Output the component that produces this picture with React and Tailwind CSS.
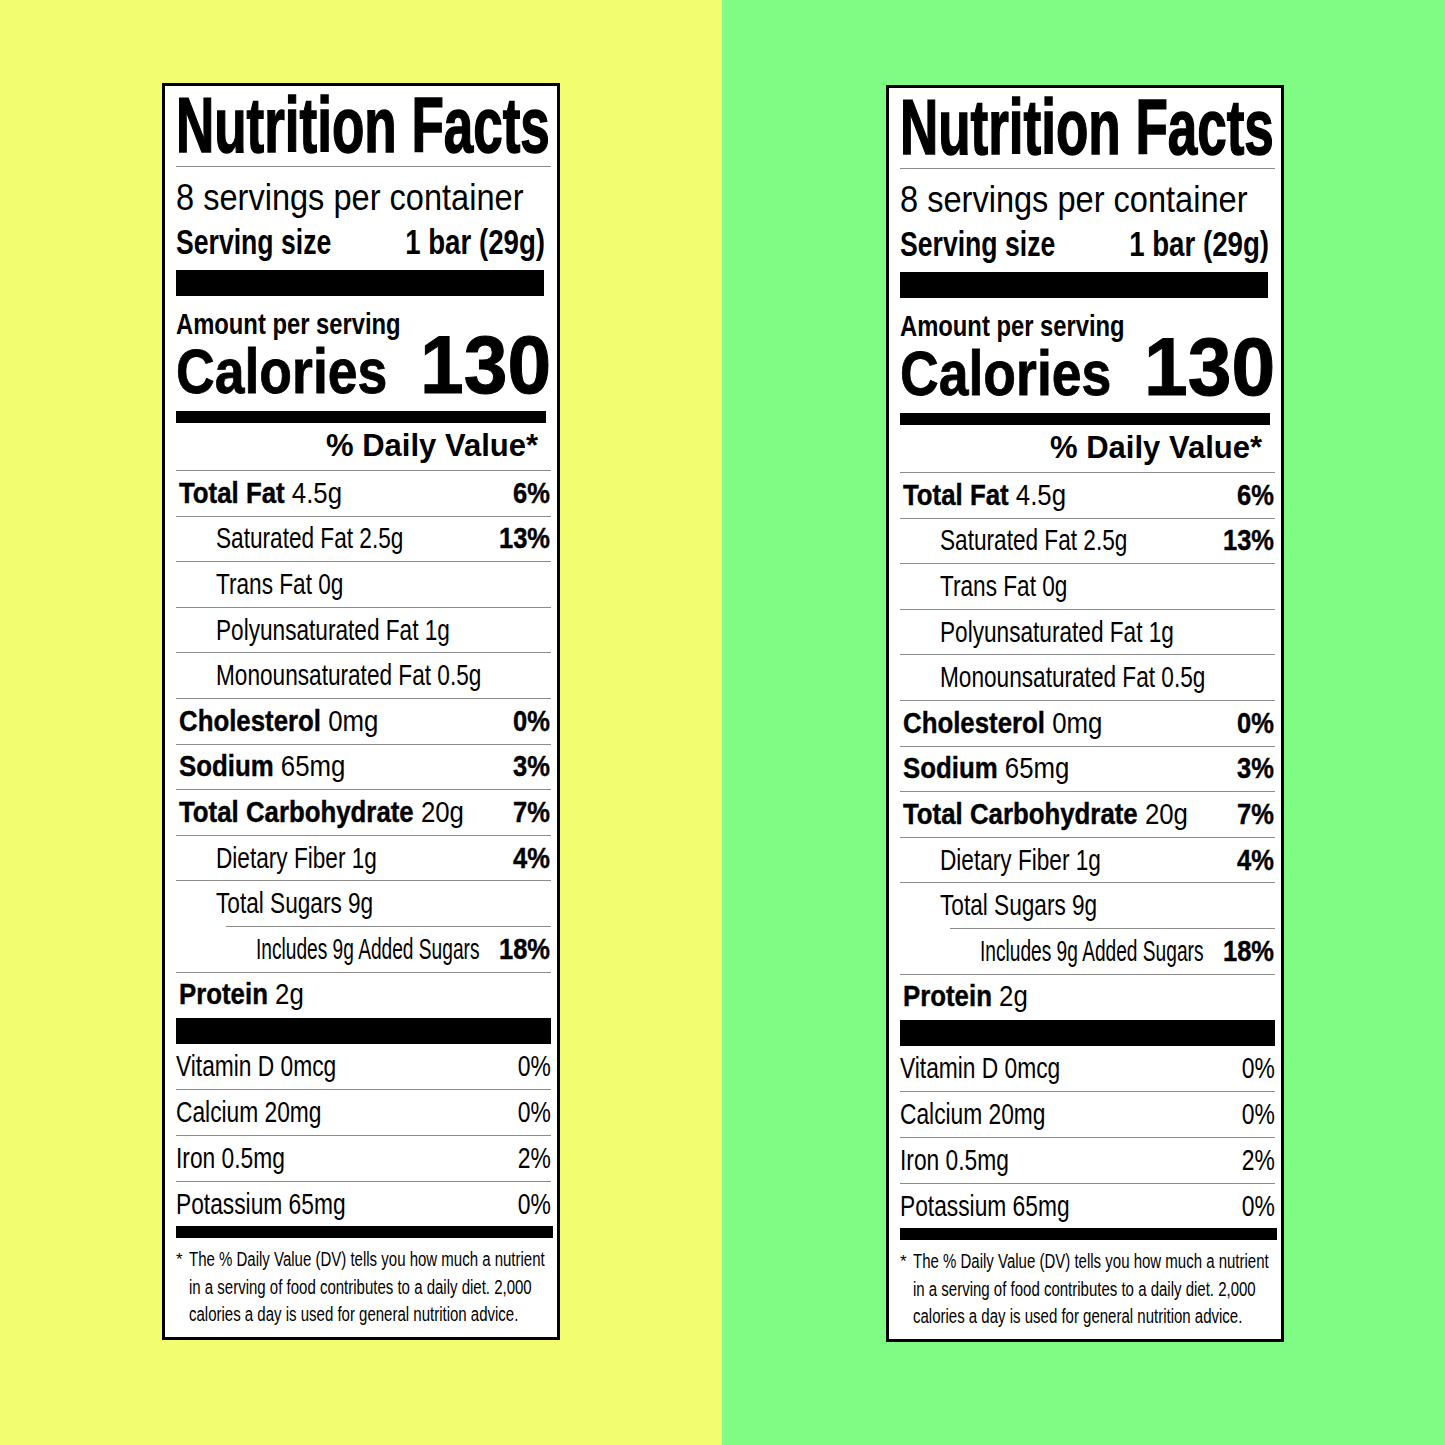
const rows = [
  { bold: 'Total Fat', rest: '4.5g', pct: '6%', level: 0 },
  { rest: 'Saturated Fat 2.5g', pct: '13%', level: 1 },
  { rest: 'Trans Fat 0g', level: 1 },
  { rest: 'Polyunsaturated Fat 1g', level: 1 },
  { rest: 'Monounsaturated Fat 0.5g', level: 1 },
  { bold: 'Cholesterol', rest: '0mg', pct: '0%', level: 0 },
  { bold: 'Sodium', rest: '65mg', pct: '3%', level: 0 },
  { bold: 'Total Carbohydrate', rest: '20g', pct: '7%', level: 0 },
  { rest: 'Dietary Fiber 1g', pct: '4%', level: 1 },
  { rest: 'Total Sugars 9g', level: 1 },
  { rest: 'Includes 9g Added Sugars', pct: '18%', level: 2 },
  { bold: 'Protein', rest: '2g', level: 0 },
]

const vitamins = [
  { name: 'Vitamin D 0mcg', pct: '0%' },
  { name: 'Calcium 20mg', pct: '0%' },
  { name: 'Iron 0.5mg', pct: '2%' },
  { name: 'Potassium 65mg', pct: '0%' },
]

function NutrientRow({ row }) {
  const pad = row.level === 0 ? 'pl-[3px]' : row.level === 1 ? 'pl-[40px]' : 'pl-[80px]'
  const squeeze = row.level === 0 ? 'scale-x-[0.89]' : row.level === 1 ? 'scale-x-[0.78]' : 'scale-x-[0.66]'
  return (
    <>
      <div className={`h-px bg-[#8c8c8c] ${row.level === 2 ? 'ml-[50px]' : ''}`} />
      <div className={`flex h-[44.6px] items-center pr-px text-[29px] leading-none ${pad}`}>
        <div className="min-w-0 flex-1 whitespace-nowrap">
          <span className={`inline-block origin-left ${squeeze}`}>
            {row.bold ? <b className="[-webkit-text-stroke:0.4px_black]">{row.bold} </b> : null}
            {row.rest}
          </span>
        </div>
        {row.pct ? (
          <b className="inline-block origin-right scale-x-[0.88] whitespace-nowrap [-webkit-text-stroke:0.4px_black]">
            {row.pct}
          </b>
        ) : null}
      </div>
    </>
  )
}

function Label() {
  return (
    <div className="w-[398px] border-[3px] border-black bg-white pl-[11px] pr-[6px] font-['Liberation_Sans',sans-serif] text-black">
      <div className="h-[80px] whitespace-nowrap pt-px">
        <h1 className="inline-block origin-left scale-x-[0.688] text-[77px] font-bold leading-none [-webkit-text-stroke:1.5px_black]">
          Nutrition Facts
        </h1>
      </div>
      <div className="h-px bg-[#8c8c8c]" />
      <div className="mt-[12px] whitespace-nowrap text-[37px] leading-none">
        <span className="inline-block origin-left scale-x-[0.88]">8 servings per container</span>
      </div>
      <div className="mt-[8px] flex items-baseline pr-[6px] text-[35px] font-bold leading-none">
        <div className="min-w-0 flex-1 whitespace-nowrap">
          <span className="inline-block origin-left scale-x-[0.76]">Serving size</span>
        </div>
        <span className="inline-block origin-right scale-x-[0.79] whitespace-nowrap">1 bar (29g)</span>
      </div>
      <div className="mt-[11px] mr-[7px] h-[26px] bg-black" />
      <div className="mt-[13.5px] whitespace-nowrap text-[29px] font-bold leading-none">
        <span className="inline-block origin-left scale-x-[0.82]">Amount per serving</span>
      </div>
      <div className="-mt-[14px] flex items-baseline font-bold leading-none">
        <div className="min-w-0 flex-1 whitespace-nowrap text-[63px]">
          <span className="inline-block origin-left scale-x-[0.85] [-webkit-text-stroke:0.8px_black]">Calories</span>
        </div>
        <span className="inline-block origin-right scale-x-[0.97] text-[81px] [-webkit-text-stroke:1px_black]">130</span>
      </div>
      <div className="mt-[5.6px] mr-[5px] h-[12px] bg-black" />
      <div className="flex h-[47px] items-center justify-end pr-[13px] text-[31px] font-bold">% Daily Value*</div>
      {rows.map((row) => (
        <NutrientRow key={row.rest} row={row} />
      ))}
      <div className="mt-px h-[26px] bg-black" />
      {vitamins.map((v, i) => (
        <div key={v.name}>
          {i > 0 ? <div className="h-px bg-[#8c8c8c]" /> : null}
          <div className={`flex items-center text-[29px] leading-none ${i === 3 ? 'h-[44px]' : 'h-[45px]'}`}>
            <div className="min-w-0 flex-1 whitespace-nowrap">
              <span className="inline-block origin-left scale-x-[0.785]">{v.name}</span>
            </div>
            <span className="inline-block origin-right scale-x-[0.79]">{v.pct}</span>
          </div>
        </div>
      ))}
      <div className="-mr-[2px] h-[12px] bg-black" />
      <div className="flex pb-[8px] pt-[8px] text-[20px] leading-[27.5px]">
        <span className="w-[13px] shrink-0 text-[17px]">*</span>
        <div className="min-w-0 flex-1 whitespace-nowrap">
          <p className="inline-block origin-left scale-x-[0.75]">
            The % Daily Value (DV) tells you how much a nutrient
            <br />
            in a serving of food contributes to a daily diet. 2,000
            <br />
            calories a day is used for general nutrition advice.
          </p>
        </div>
      </div>
    </div>
  )
}

export default function App() {
  return (
    <div className="flex h-[1445px] w-[1445px] overflow-hidden">
      <div className="h-full w-[722px] shrink-0 bg-[#f2fd70] pl-[162px] pt-[83px]">
        <Label />
      </div>
      <div className="h-full flex-1 bg-[#80fc84] pl-[164px] pt-[85px]">
        <Label />
      </div>
    </div>
  )
}
